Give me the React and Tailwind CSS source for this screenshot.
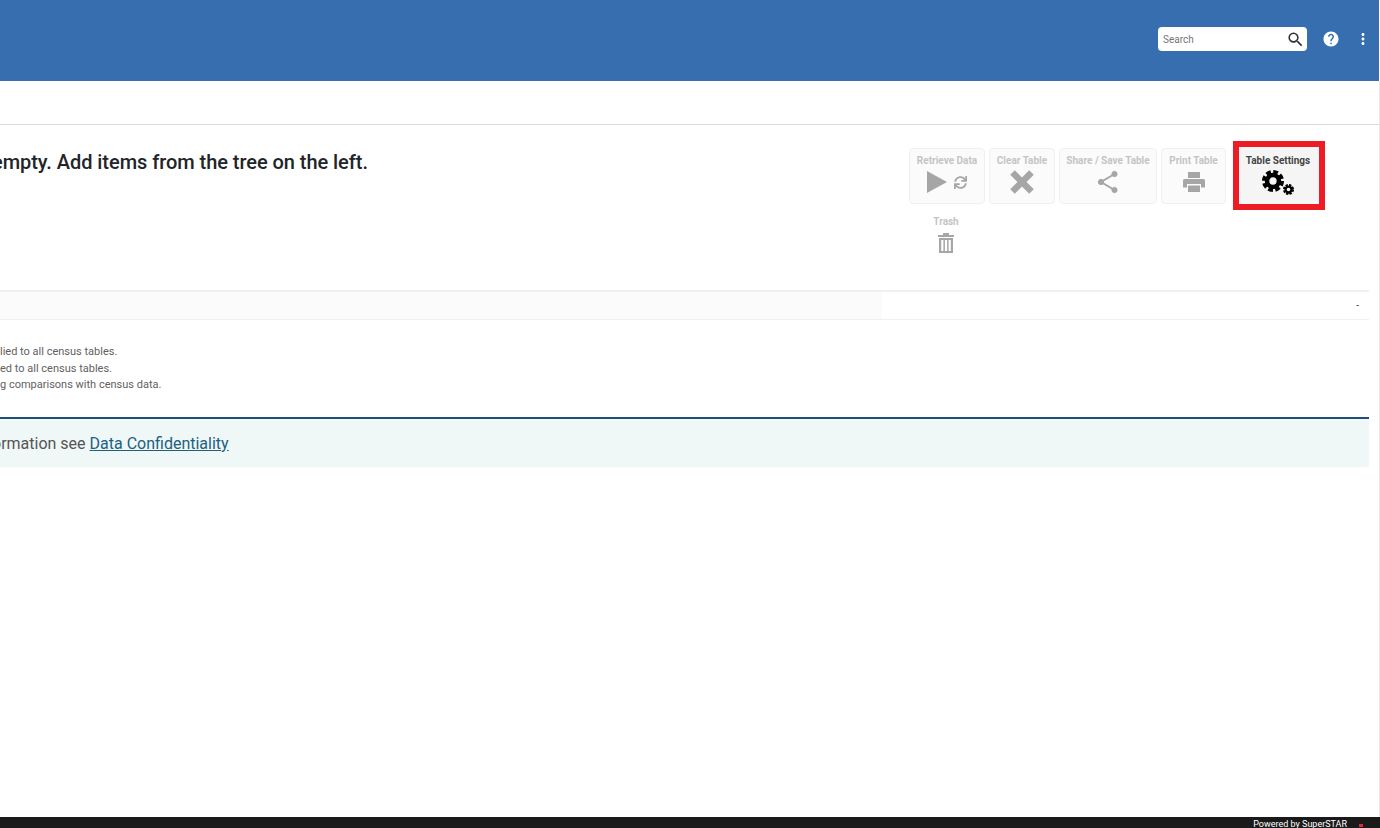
import React from 'react';
import { FaSync } from 'react-icons/fa';
import { MdSearch, MdHelp, MdMoreVert } from 'react-icons/md';

const ToolButton = ({ label, width, children }) => (
  <div className={`${width} h-[56px] flex flex-col items-center bg-[#fbfbfb] border border-[#f0f0f0] rounded-sm pt-[6px]`}>
    <span className="text-[10px] leading-[12px] font-bold text-[#c4c4c4] whitespace-nowrap">{label}</span>
    <div className="flex items-center justify-center gap-[7px] h-[28px] mt-[1px] text-[#a6a6a6]">{children}</div>
  </div>
);

const PlayIcon = () => (
  <svg viewBox="0 0 20 22" className="w-[20px] h-[22px]" fill="currentColor">
    <path d="M0 0 L20 11 L0 22 Z" />
  </svg>
);

const CrossIcon = () => (
  <svg viewBox="0 0 24 24" className="w-[24px] h-[24px]" fill="none" stroke="currentColor" strokeWidth="6.5">
    <path d="M2.5 2.5 L21.5 21.5 M21.5 2.5 L2.5 21.5" />
  </svg>
);

const ShareIcon = () => (
  <svg viewBox="0 0 22 24" className="w-[22px] h-[24px]" fill="currentColor" stroke="currentColor">
    <path d="M17.5 4 L4 12 L17.5 20" fill="none" strokeWidth="2" />
    <circle cx="4" cy="12" r="2.6" />
    <circle cx="17.5" cy="4" r="2.6" />
    <circle cx="17.5" cy="20" r="2.6" />
  </svg>
);

const PrinterIcon = () => (
  <svg viewBox="0 0 22 20" className="w-[22px] h-[20px]" fill="currentColor">
    <path d="M5 0 H17 V6 H5 Z" />
    <path d="M1.5 7 H20.5 Q22 7 22 8.5 V15.5 H18 V12 H4 V15.5 H0 V8.5 Q0 7 1.5 7 Z" />
    <path d="M5 13.5 H17 V20 H5 Z" />
  </svg>
);

const TrashIcon = () => (
  <svg viewBox="0 0 16 21" className="w-[16px] h-[21px] mt-[4px] -ml-[2px] text-[#a6a6a6]" fill="currentColor">
    <path d="M5 3 V1 H11 V3 H16 V5 H0 V3 Z" />
    <path d="M1 6 H15 V21 H1 Z M3.2 8 V19 H5.4 V8 Z M6.9 8 V19 H9.1 V8 Z M10.6 8 V19 H12.8 V8 Z" fillRule="evenodd" />
  </svg>
);

const Gear = ({ size }) => (
  <svg viewBox="0 0 24 24" style={{ width: size, height: size }} fill="none" stroke="black">
    <circle cx="12" cy="12" r="6.5" strokeWidth="5" />
    <circle cx="12" cy="12" r="10" strokeWidth="4" strokeDasharray="5.2 2.65" />
  </svg>
);

const App = () => {
  return (
    <div className="h-[828px] w-[1380px] flex flex-col overflow-hidden bg-white font-['Roboto',sans-serif]">
      {/* Header */}
      <header className="w-[1379px] h-[81px] shrink-0 bg-[#376eb0] flex items-center justify-end pb-[3px]">
        <div className="w-[149px] h-[24px] bg-white rounded-sm flex items-center justify-between pl-[5px] pr-[2px]">
          <span className="text-[10px] text-[#757575]">Search</span>
          <MdSearch className="w-[19px] h-[19px] text-[#333]" />
        </div>
        <MdHelp className="w-[18px] h-[18px] text-white ml-[15px]" />
        <MdMoreVert className="w-[18px] h-[18px] text-white ml-[14px] mr-[7px]" />
      </header>

      <div className="flex-1 flex flex-col w-[1380px] border-r border-[#e8e8e8] min-h-0 overflow-hidden">
        {/* Sub bar */}
        <div className="h-[44px] shrink-0 border-b border-[#dcdcdc]" />

        {/* Heading and toolbar */}
        <div className="h-[165px] shrink-0 flex justify-between pr-[54px] pt-[16px]">
          <h2 className="text-[20px] leading-[24px] tracking-[-0.05px] font-medium text-[#212529] whitespace-nowrap -ml-[8px] mt-[9px]">
            empty. Add items from the tree on the left.
          </h2>
          <div className="w-[416px]">
            <div className="flex gap-[4px] items-start">
              <div className="pt-[7px] flex gap-[4px]">
                <ToolButton label="Retrieve Data" width="w-[76px]">
                  <PlayIcon />
                  <FaSync className="w-[13px] h-[13px]" />
                </ToolButton>
                <ToolButton label="Clear Table" width="w-[66px]">
                  <CrossIcon />
                </ToolButton>
                <ToolButton label="Share / Save Table" width="w-[98px]">
                  <ShareIcon />
                </ToolButton>
                <ToolButton label="Print Table" width="w-[65px]">
                  <PrinterIcon />
                </ToolButton>
              </div>
              <div className="ml-[3px] w-[92px] h-[69px] border-[6px] border-[#ed1c24] bg-[#f5f5f5] flex flex-col items-center pt-[8px] pr-[2px]">
                <span className="text-[10px] leading-[12px] font-bold text-[#444] whitespace-nowrap">Table Settings</span>
                <div className="flex items-end mt-[3px] -ml-[1px]">
                  <Gear size={22} />
                  <div className="-ml-[1px] -mb-[3px]">
                    <Gear size={11} />
                  </div>
                </div>
              </div>
            </div>
            <div className="w-[76px] flex flex-col items-center mt-[6px]">
              <span className="text-[10px] leading-[12px] font-bold text-[#c4c4c4] -ml-[2px]">Trash</span>
              <TrashIcon />
            </div>
          </div>
        </div>

        {/* Table row */}
        <div className="w-[1369px] h-[30px] shrink-0 flex border-t-2 border-b border-[#f0f0f0]">
          <div className="w-[882px] bg-[#fbfbfb]" />
          <div className="flex-1 flex items-center justify-end pr-[10px] text-[10px] text-[#333]">-</div>
        </div>

        {/* Notes */}
        <div className="h-[97px] shrink-0 pt-[24px] text-[11px] leading-[16.5px] text-[#5f5f5f] whitespace-nowrap">
          <p>lied to all census tables.</p>
          <p>ed to all census tables.</p>
          <p>g comparisons with census data.</p>
        </div>

        {/* Confidentiality notice */}
        <div className="w-[1369px] h-[50px] shrink-0 flex items-center bg-[#eff7f7] border-t-2 border-[#1f4e79] text-[16px] text-[#555] whitespace-nowrap overflow-hidden pt-[2px]">
          <span className="-ml-[8px]">ormation see&nbsp;</span>
          <a className="text-[#20607f] underline">Data Confidentiality</a>
        </div>

        <div className="flex-1" />
      </div>

      {/* Footer */}
      <footer className="h-[11px] shrink-0 bg-[#1a1a1a] flex items-center justify-end pr-[17px] overflow-hidden">
        <span className="text-[9px] leading-[11px] text-white mt-[3px]">Powered by SuperSTAR</span>
        <span className="w-[4px] h-[3px] bg-[#e0282e] ml-[12px] mt-[6px]" />
      </footer>
    </div>
  );
};

export default App;
